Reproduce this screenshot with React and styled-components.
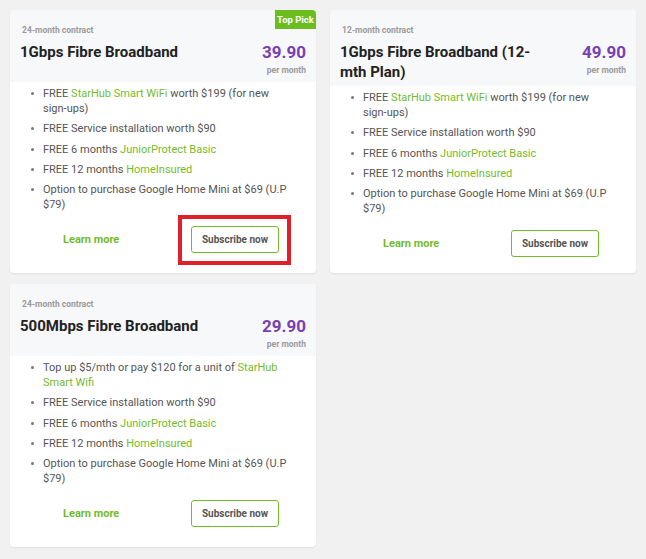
import React from 'react'
import styled, { createGlobalStyle } from 'styled-components'

const GlobalStyle = createGlobalStyle`
  body {
    margin: 0;
    background: #f1f1f1;
    font-family: Roboto, "Liberation Sans", sans-serif;
  }
`

const Page = styled.div`
  display: grid;
  grid-template-columns: 306px 306px;
  column-gap: 14px;
  row-gap: 11px;
  padding: 10px;
  align-items: stretch;
`

const Card = styled.div`
  position: relative;
  min-height: 263px;
  background: #fff;
  border-radius: 4px;
  box-shadow: 0 1px 2px rgba(0, 0, 0, 0.07);
`

const Header = styled.div`
  background: #f7f8fa;
  border-radius: 4px 4px 0 0;
  padding: 14px 10px 4px 10px;
`

const Contract = styled.div`
  font-size: 8.5px;
  font-weight: 700;
  color: #9a9a9a;
  line-height: 12px;
  padding-left: 2px;
`

const TitleRow = styled.div`
  display: flex;
  justify-content: space-between;
  align-items: flex-start;
  margin-top: 6px;
`

const Title = styled.h2`
  margin: 0;
  font-size: 15px;
  line-height: 20px;
  font-weight: 700;
  color: #222;
  max-width: 200px;
`

const PriceCol = styled.div`
  display: flex;
  flex-direction: column;
  align-items: flex-end;
  padding-bottom: 2px;
`

const Price = styled.div`
  font-size: 17px;
  line-height: 20px;
  font-weight: 700;
  color: #7b3fb3;
`

const PerMonth = styled.div`
  font-size: 8.5px;
  line-height: 12px;
  font-weight: 700;
  color: #9a9a9a;
  margin-top: 2px;
`

const Badge = styled.div`
  position: absolute;
  top: 0;
  right: 0;
  width: 41px;
  height: 19px;
  display: flex;
  align-items: center;
  justify-content: center;
  background: #6bbd1f;
  color: #fff;
  font-size: 9.5px;
  font-weight: 700;
  border-radius: 0 4px 0 0;
`

const List = styled.ul`
  list-style: none;
  margin: 0;
  padding: 4px 27px 0 33px;
`

const Item = styled.li`
  position: relative;
  font-size: 11px;
  line-height: 15px;
  color: #555;
  margin-bottom: 5.3px;

  &:last-child {
    margin-bottom: 0;
  }

  &::before {
    content: '';
    position: absolute;
    left: -12px;
    top: 6px;
    width: 3px;
    height: 3px;
    border-radius: 50%;
    background: #777;
  }
`

const Link = styled.span`
  color: #74bb2a;
`

const Footer = styled.div`
  display: flex;
  align-items: center;
  padding: 14px 37px 16px 53px;
`

const LearnMore = styled.a`
  font-size: 11px;
  font-weight: 700;
  color: #74bb2a;
  text-decoration: none;
`

const Subscribe = styled.button`
  position: relative;
  margin-left: auto;
  width: 88px;
  height: 27px;
  background: #fff;
  border: 1px solid #74bb2a;
  border-radius: 3px;
  font-family: inherit;
  font-size: 10px;
  font-weight: 700;
  color: #555;

  &::after {
    content: '';
    display: ${({ $highlighted }) => $highlighted ? 'block' : 'none'};
    position: absolute;
    left: -14px;
    right: -13px;
    top: -12px;
    bottom: -13px;
    border: 4px solid #e11f2a;
  }
`

const plans = [
  {
    contract: '24-month contract',
    title: '1Gbps Fibre Broadband',
    price: '39.90',
    topPick: true,
    highlighted: true,
    items: [
      <>FREE <Link>StarHub Smart WiFi</Link> worth $199 (for new sign-ups)</>,
      <>FREE Service installation worth $90</>,
      <>FREE 6 months <Link>JuniorProtect Basic</Link></>,
      <>FREE 12 months <Link>HomeInsured</Link></>,
      <>Option to purchase Google Home Mini at $69 (U.P $79)</>,
    ],
  },
  {
    contract: '12-month contract',
    title: '1Gbps Fibre Broadband (12-mth Plan)',
    price: '49.90',
    items: [
      <>FREE <Link>StarHub Smart WiFi</Link> worth $199 (for new sign-ups)</>,
      <>FREE Service installation worth $90</>,
      <>FREE 6 months <Link>JuniorProtect Basic</Link></>,
      <>FREE 12 months <Link>HomeInsured</Link></>,
      <>Option to purchase Google Home Mini at $69 (U.P $79)</>,
    ],
  },
  {
    contract: '24-month contract',
    title: '500Mbps Fibre Broadband',
    price: '29.90',
    items: [
      <>Top up $5/mth or pay $120 for a unit of <Link>StarHub Smart Wifi</Link></>,
      <>FREE Service installation worth $90</>,
      <>FREE 6 months <Link>JuniorProtect Basic</Link></>,
      <>FREE 12 months <Link>HomeInsured</Link></>,
      <>Option to purchase Google Home Mini at $69 (U.P $79)</>,
    ],
  },
]

function PlanCard({ plan }) {
  return (
    <Card>
      {plan.topPick && <Badge>Top Pick</Badge>}
      <Header>
        <Contract>{plan.contract}</Contract>
        <TitleRow>
          <Title>{plan.title}</Title>
          <PriceCol>
            <Price>{plan.price}</Price>
            <PerMonth>per month</PerMonth>
          </PriceCol>
        </TitleRow>
      </Header>
      <List>
        {plan.items.map((item, i) => <Item key={i}>{item}</Item>)}
      </List>
      <Footer>
        <LearnMore href="#">Learn more</LearnMore>
        <Subscribe $highlighted={plan.highlighted}>Subscribe now</Subscribe>
      </Footer>
    </Card>
  )
}

export default function App() {
  return (
    <>
      <GlobalStyle />
      <Page>
        {plans.map(plan => <PlanCard key={plan.title} plan={plan} />)}
      </Page>
    </>
  )
}
